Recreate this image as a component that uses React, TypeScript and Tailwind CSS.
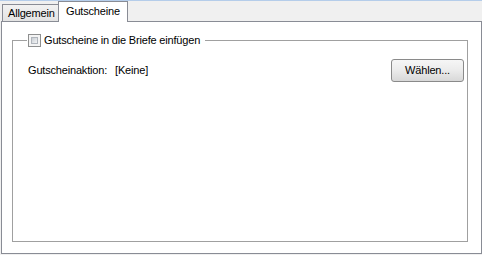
export default function App() {
  return (
    <div className="w-[482px] h-[255px] bg-[#f0f0f0] border-t border-[#b5cdea] font-['Liberation_Sans',Arial,sans-serif] text-[11px] leading-[13px] tracking-[-0.18px] text-black overflow-hidden">
      {/* tab strip */}
      <div className="flex items-end h-[20px] pl-[2px]">
        <div className="h-[17px] w-[56px] border-t border-l border-[#898c95] bg-gradient-to-b from-[#f2f2f2] to-[#e3e3e3] flex items-center pl-[5px] pt-[1px]">
          Allgemein
        </div>
        <div className="relative z-10 -mb-px h-[21px] w-[70px] border-t border-l border-r border-[#898c95] bg-white flex items-start pl-[7px] pt-[3px]">
          Gutscheine
        </div>
      </div>

      {/* tab panel */}
      <div className="ml-px w-[481px] h-[233px] border border-[#898c95] bg-white pt-[18px] pl-[10px]">
        <div className="relative w-[456px] h-[202px] border border-[#a0a0a0]">
          <label className="absolute -top-[7px] left-[14px] flex items-center gap-[3px] bg-white pl-px pr-[5px] h-[13px]">
            <span className="w-[13px] h-[13px] border border-[#8e8f8f] bg-[#f4f4f4] p-[2px] flex">
              <span className="flex-1 border border-[#b0b5bc] bg-gradient-to-br from-[#c9ced4] to-[#f3f4f5]" />
            </span>
            <span>Gutscheine in die Briefe einfügen</span>
          </label>

          <div className="mt-[18px] flex items-center justify-between pl-[15px] pr-[3px]">
            <div className="flex items-center gap-[8px]">
              <span>Gutscheinaktion:</span>
              <span>[Keine]</span>
            </div>
            <button className="w-[73px] h-[23px] rounded-[3px] border border-[#8a8a8a] bg-gradient-to-b from-[#f6f6f6] via-[#ebebeb] to-[#d8d8d8] flex items-center justify-center pb-px">
              Wählen...
            </button>
          </div>
        </div>
      </div>
    </div>
  );
}
